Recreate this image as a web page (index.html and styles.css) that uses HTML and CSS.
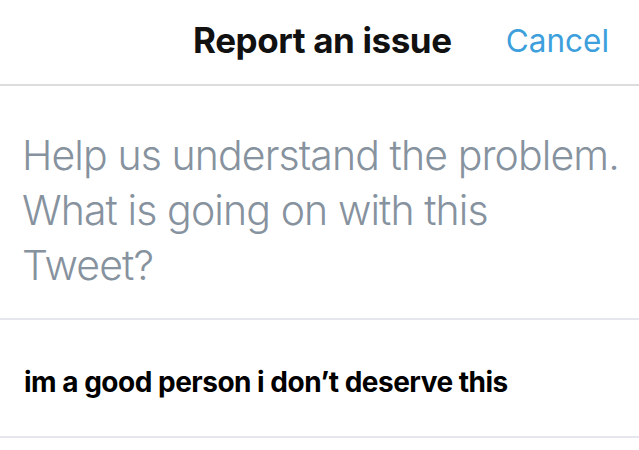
FILE: index.html
```html
<!DOCTYPE html>
<html>
<head>
<meta charset="utf-8">
<link rel="stylesheet" href="styles.css">
</head>
<body>
<div class="screen">
  <header class="nav">
    <h1 class="title">Report an issue</h1>
    <span class="cancel">Cancel</span>
  </header>
  <section class="prompt">
    <p>Help us understand the problem.<br>What is going on with this<br>Tweet?</p>
  </section>
  <div class="option">
    <span>im a good person i don’t deserve this</span>
  </div>
</div>
</body>
</html>
```
FILE: styles.css
```css
html, body {
  margin: 0;
  padding: 0;
  background: #fff;
}
.screen {
  width: 639px;
  height: 450px;
  overflow: hidden;
  font-family: Inter, "Liberation Sans", sans-serif;
}
.nav {
  height: 86px;
  border-bottom: 2px solid #dcdcdc;
  display: flex;
  align-items: center;
  box-sizing: border-box;
  padding: 0 0 4px 193px;
}
.title {
  margin: 0;
  font-size: 35px;
  font-weight: 700;
  color: #111;
  letter-spacing: -0.4px;
}
.cancel {
  margin-left: 54px;
  font-size: 31.5px;
  font-weight: 400;
  color: #3d9fdc;
}
.prompt {
  height: 234px;
  border-bottom: 2px solid #e6e6ee;
  box-sizing: border-box;
  padding: 42px 0 0 22px;
}
.prompt p {
  margin: 0;
  font-size: 41px;
  line-height: 55px;
  font-weight: 300;
  color: #86929e;
  letter-spacing: -0.9px;
}
.option {
  height: 118px;
  border-bottom: 2px solid #e6e6ee;
  box-sizing: border-box;
  display: flex;
  align-items: center;
  padding: 8px 0 0 24px;
}
.option span {
  font-size: 28px;
  font-weight: 700;
  color: #000;
  letter-spacing: -0.5px;
}
```
